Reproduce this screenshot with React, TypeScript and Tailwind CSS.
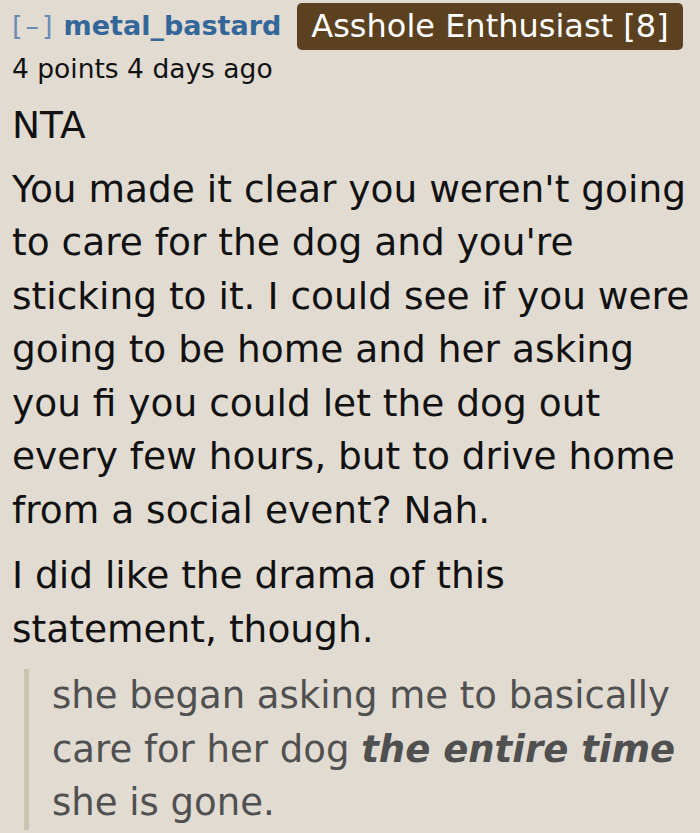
export default function App() {
  return (
    <div
      className="min-h-[833px] w-[700px] overflow-hidden bg-[#e2dbd1] pl-3 text-[#111]"
      style={{ fontFamily: '"DejaVu Sans", Verdana, sans-serif' }}
    >
      <div className="flex items-center pt-[3px]">
        <span className="text-[27px] tracking-[3px] text-[#6a8cb4]">[–]</span>
        <span className="ml-[8px] text-[27px] font-bold text-[#336699]">metal_bastard</span>
        <span className="ml-[16px] rounded-[5px] bg-[#5b4120] px-[14px] py-[4px] text-[32px] leading-[39px] text-white">
          Asshole Enthusiast [8]
        </span>
      </div>
      <div className="mt-[4px] text-[26.5px] leading-[30px]">4 points 4 days ago</div>
      <div className="mt-[15px] whitespace-nowrap text-[37.5px] leading-[53.5px]">
        <p>NTA</p>
        <p className="mt-[10px]">
          You made it clear you weren't going
          <br />
          to care for the dog and you're
          <br />
          sticking to it. I could see if you were
          <br />
          going to be home and her asking
          <br />
          you fi you could let the dog out
          <br />
          every few hours, but to drive home
          <br />
          from a social event? Nah.
        </p>
        <p className="mt-[12px]">
          I did like the drama of this
          <br />
          statement, though.
        </p>
        <blockquote className="ml-3 mt-[13px] border-l-[5px] border-[#c9c3b2] pl-[23px] text-[37px] text-[#505050]">
          she began asking me to basically
          <br />
          care for her dog <strong className="italic">the entire time</strong>
          <br />
          she is gone.
        </blockquote>
      </div>
    </div>
  )
}
